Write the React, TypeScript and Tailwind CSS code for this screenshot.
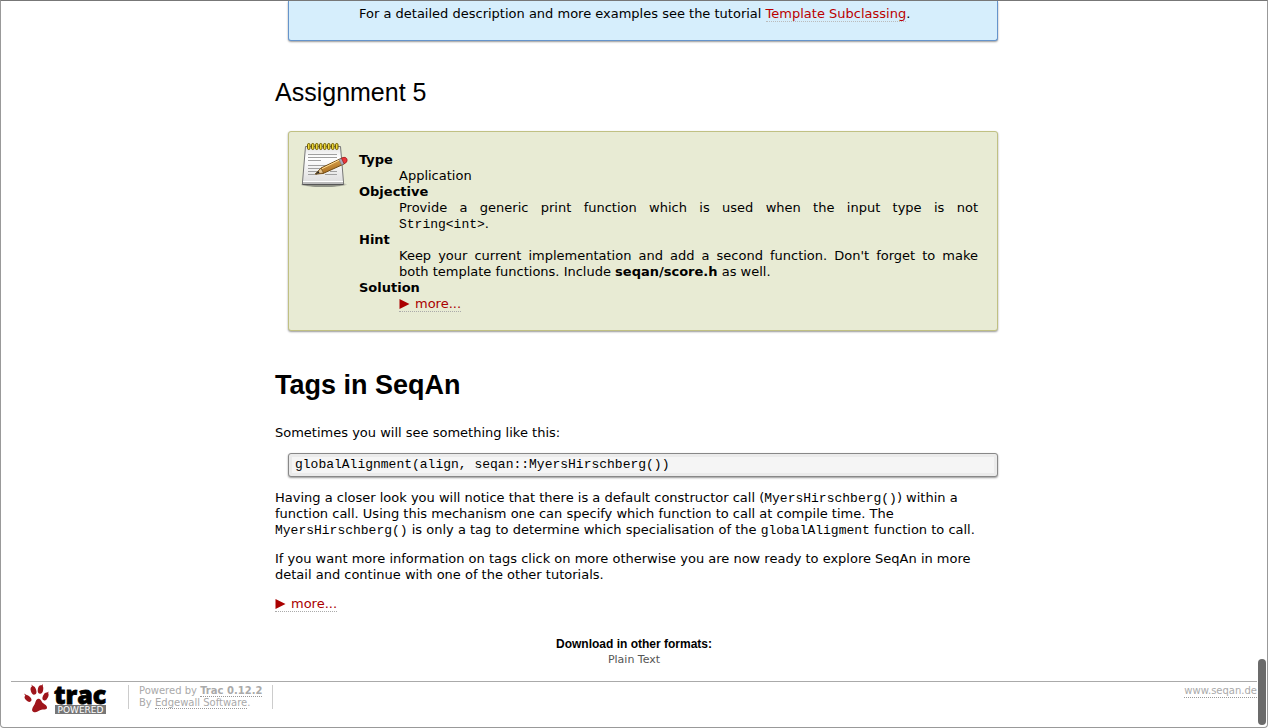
import type { ReactNode } from "react";

const link = "border-b border-dotted border-[#bbbbbb] text-[#bb0000]";
const footLink = "border-b border-dotted border-[#999999]";

function Code({ children }: { children: ReactNode }) {
  return <code className="font-['Liberation_Mono',monospace] text-[13px] leading-none">{children}</code>;
}

function More() {
  return (
    <a href="#more" className="inline-flex h-4 items-center gap-[5px] border-b border-dotted border-[#aaaaaa] text-[#aa0000]">
      <svg viewBox="0 0 11 10" className="h-[10px] w-[11px] shrink-0" aria-hidden="true">
        <path d="M0.5 0L10.5 5L0.5 10Z" fill="#aa0000" />
      </svg>
      more...
    </a>
  );
}

function NotepadIcon() {
  return (
    <svg viewBox="0 0 48 48" className="h-12 w-12 shrink-0" aria-hidden="true">
      <defs>
        <linearGradient id="paper" x1="0" y1="0" x2="0" y2="1">
          <stop offset="0" stopColor="#e2e2e2" />
          <stop offset="0.3" stopColor="#ffffff" />
          <stop offset="1" stopColor="#dcdcdc" />
        </linearGradient>
        <linearGradient id="wood" x1="0" y1="0" x2="0.4" y2="1">
          <stop offset="0" stopColor="#f0bd62" />
          <stop offset="1" stopColor="#a5681c" />
        </linearGradient>
        <radialGradient id="shade">
          <stop offset="0.75" stopColor="#555753" stopOpacity="0.6" />
          <stop offset="1" stopColor="#555753" stopOpacity="0" />
        </radialGradient>
      </defs>
      <ellipse cx="22.500" cy="43.500" rx="24" ry="3" fill="url(#shade)" />
      <path d="M4.500 5.500H39.500L42.500 41V43.500H1.500V41Z" fill="url(#paper)" stroke="#777777" strokeLinejoin="round" />
      <path d="M2 41H42V43H2Z" fill="#bcbcbc" />
      <path d="M2 40.500H42" stroke="#ffffff" />
      <path d="M1.500 43.500H42.500" stroke="#555555" />
      <path d="M7 13.500H36M7 16.500H36M7 19.500H20M7 24.500H30M7 27.500H24M7 30.500H19M7 33.500H16M29 30.500H36M24 33.500H36" stroke="#a0a0a0" />
      {[6, 10, 14, 18, 22, 26, 30, 34].map((x) => (
        <rect key={x} x={x + 0.5} y="2.500" width="2.500" height="6" rx="1.250" fill="#f0dc3c" stroke="#6d5a00" />
      ))}
      <path d="M14.500 33L20 27L40 17.500Q44 15.500 45.500 18.500Q46.500 21 43 23L22 32.500Z" fill="url(#wood)" stroke="#704b14" strokeLinejoin="round" />
      <path d="M21 27.700L40.500 18" stroke="#ffdc91" />
      <path d="M14.500 33L20 27L22.500 32Z" fill="#e8c68f" stroke="#704b14" strokeWidth="0.700" />
      <path d="M14.500 33L17.500 30L18.500 32Z" fill="#252525" />
      <path d="M38 18.500L40.500 17.200L43.200 22.800L40.500 24Z" fill="#a9a9b5" stroke="#686878" strokeWidth="0.500" />
      <path d="M40.500 17.200Q44.500 15.200 46 18Q47.200 21 43.200 22.800Z" fill="#e93639" stroke="#a31a21" strokeWidth="0.700" />
    </svg>
  );
}

function TracLogo() {
  return (
    <svg viewBox="0 0 84 32" className="h-8 w-[84px]" role="img" aria-label="Trac Powered">
      <g fill="#9f151b">
        <path d="M14.500 15C16.500 14 18 15.500 19 18C20 20 24 20.500 24 23.500C24 26.500 20 25 17.500 26C14.500 27.200 13.500 29 10.500 28C7.500 26.500 10 23 11.500 20.500C12.500 18.500 12.500 16 14.500 15Z" />
        <ellipse cx="10.500" cy="6.500" rx="2.700" ry="4.300" transform="rotate(-17 10.500 6.500)" />
        <ellipse cx="17.500" cy="5.500" rx="2.700" ry="4.300" transform="rotate(10 17.500 5.500)" />
        <ellipse cx="5" cy="14.500" rx="2.500" ry="4" transform="rotate(-45 5 14.500)" />
        <ellipse cx="22.500" cy="12.500" rx="2.600" ry="4.200" transform="rotate(25 22.500 12.500)" />
        <path d="M9 3.500L8.500 0.500L11 3ZM18 2L20 0L19.500 3ZM2.500 12L1 9.500L4.500 11.500ZM23 9.500L25.500 7.500L25 11Z" />
      </g>
      <text x="31" y="20" fontFamily="Open Sans, sans-serif" fontWeight="800" fontSize="25" stroke="#000000" strokeWidth="0.800">trac</text>
      <rect x="32" y="21" width="51" height="9" fill="#777777" />
      <text x="57.500" y="29" textAnchor="middle" fill="#ffffff" fontFamily="DejaVu Sans, sans-serif" fontSize="9">POWERED</text>
    </svg>
  );
}

export default function App() {
  return (
    <div className="relative min-h-screen overflow-hidden rounded-b-[4px] border border-t-[#777777] border-[#999999] bg-white font-['DejaVu_Sans',Verdana,sans-serif] text-[13px] leading-4 text-black">
      <main className="mx-auto max-w-[754px] pl-[18px]">
        <section className="mx-[13px] rounded-b-[3px] border border-t-0 border-[#6694cb] bg-[#d6eefc] pt-[5px] pr-5 pb-[18px] pl-[70px] shadow-[0_1px_2px_#999999]">
          <p>
            For a detailed description and more examples see the tutorial{" "}
            <a href="#subclassing" className={link}>Template Subclassing</a>.
          </p>
        </section>

        <h2 className="mt-9 font-['Liberation_Sans',sans-serif] text-[25px] leading-[30px]">Assignment 5</h2>

        <section className="mx-[13px] mt-6 flex gap-[11px] rounded-[3px] border border-[#c0c083] bg-[#e8ebd4] pr-[19px] pb-[18px] pl-3 shadow-[0_1px_2px_#999999]">
          <div className="-mr-px pt-[9px]"><NotepadIcon /></div>
          <dl className="min-w-0 flex-1 pt-5 [&_dd]:ml-10 [&_dt]:font-bold">
            <dt>Type</dt>
            <dd>Application</dd>
            <dt>Objective</dt>
            <dd>
              <span className="block text-justify [text-align-last:justify]">Provide a generic print function which is used when the input type is not</span>
              <Code>String&lt;int&gt;</Code>.
            </dd>
            <dt>Hint</dt>
            <dd>
              <span className="block text-justify [text-align-last:justify]">Keep your current implementation and add a second function. Don't forget to make</span>
              both template functions. Include <b>seqan/score.h</b> as well.
            </dd>
            <dt>Solution</dt>
            <dd className="flex"><More /></dd>
          </dl>
        </section>

        <h1 className="mt-[38px] font-['Liberation_Sans',sans-serif] text-[27px] leading-8 font-bold">Tags in SeqAn</h1>
        <p className="mt-6">Sometimes you will see something like this:</p>
        <pre className="mx-[13px] mt-3 rounded-[3px] border border-[#888888] bg-[#ebebeb] p-[3px] font-['Liberation_Mono',monospace] text-[13px] leading-4 shadow-[0_1px_2px_#999999]"><code className="block bg-[#f5f5f5] px-[3px]">globalAlignment(align, seqan::MyersHirschberg())</code></pre>
        <p className="mt-[13px]">
          Having a closer look you will notice that there is a default constructor call (<Code>MyersHirschberg()</Code>) within a function call. Using this mechanism one can specify which function to call at compile time. The <Code>MyersHirschberg()</Code> is only a tag to determine which specialisation of the <Code>globalAligment</Code> function to call.
        </p>
        <p className="mt-[13px]">
          If you want more information on tags click on more otherwise you are now ready to explore SeqAn in more detail and continue with one of the other tutorials.
        </p>
        <p className="mt-[13px] flex"><More /></p>
      </main>

      <section className="mt-6 text-center">
        <h3 className="font-['Liberation_Sans',sans-serif] text-[12px] leading-4 font-bold">Download in other formats:</h3>
        <a href="#plain" className="block text-[11px] leading-4 text-[#555555]">Plain Text</a>
      </section>

      <footer className="mx-[10px] mt-[13px] flex items-start border-t border-[#aaaaaa] pt-[3px] text-[10px] leading-3 text-[#aaaaaa]">
        <a href="#trac" className="-mt-px ml-3"><TracLogo /></a>
        <p className="ml-[21px] border-x border-[#cccccc] px-[10px]">
          Powered by <a href="#version" className={footLink}><b>Trac 0.12.2</b></a><br />
          By <a href="#edgewall" className={footLink}>Edgewall Software</a>.
        </p>
        <a href="#seqan" className={`ml-auto ${footLink}`}>www.seqan.de</a>
      </footer>
      <div className="absolute right-[1px] bottom-[2px] h-[66px] w-[8px] rounded-full bg-[#6b6b6b]" />
    </div>
  );
}
